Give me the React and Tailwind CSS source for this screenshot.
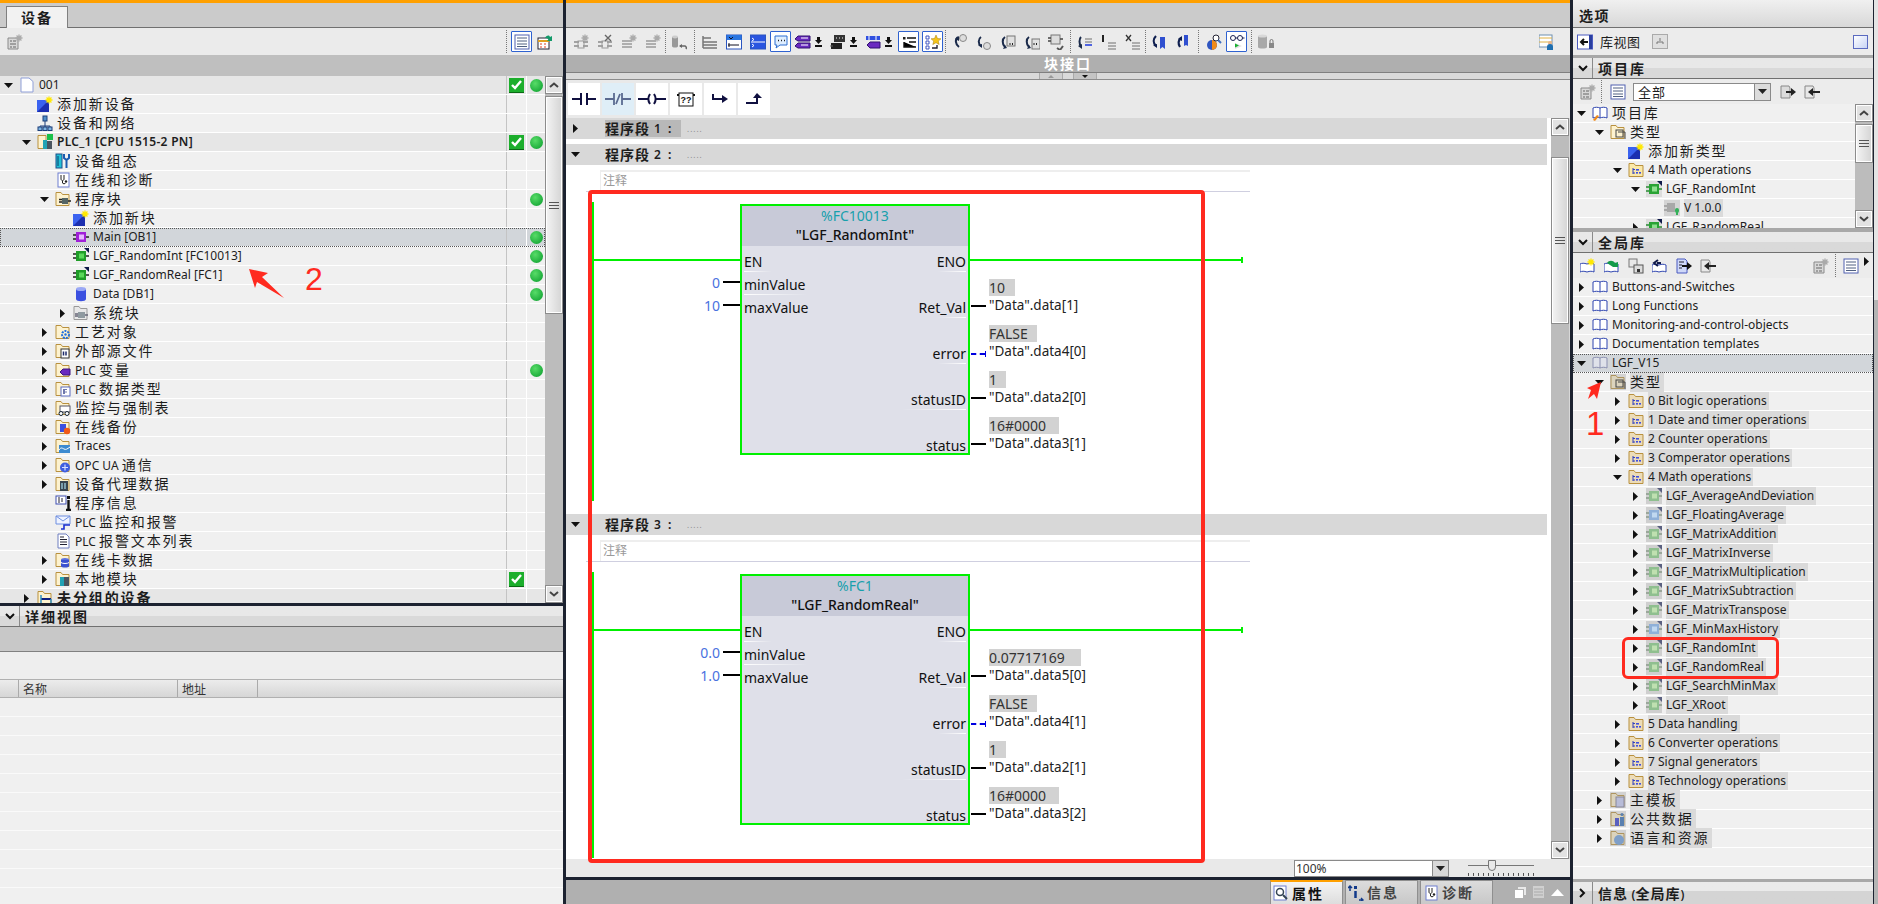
import React from "react";

const S = ({ w = 16, h = 16, children }) => (
    <svg width={w} height={h} viewBox={`0 0 ${w} ${h}`} className="shrink-0">
        {children}
    </svg>
);

// tree / toolbar icons, all hand drawn at 16px
const Star = ({ x = 12, y = 4, r = 3.5, c = "#ffe800" }) => (
    <g stroke={c} strokeWidth="1.3">
        <path d={`M${x - r} ${y}h${2 * r}M${x} ${y - r}v${2 * r}M${x - r * 0.7} ${y - r * 0.7}l${r * 1.4} ${r * 1.4}M${x + r * 0.7} ${y - r * 0.7}l${-r * 1.4} ${r * 1.4}`} />
    </g>
);
const AddIcon = () => (
    <S>
        <path d="M0 4h12v12H0z" fill="#3a62f0" />
        <path d="M0 16L12 4v12z" fill="#1c2fb0" />
        <Star />
    </S>
);
const NetIcon = () => (
    <S>
        <path d="M8 6v4M3 14v-3h10v3M8 10v4" stroke="#1c3f7a" fill="none" />
        <rect x="6" y="1" width="4" height="5" fill="#4f8fc9" stroke="#1c3f7a" />
        <rect x="1" y="12" width="4" height="3.5" fill="#7fb4e0" stroke="#1c3f7a" />
        <rect x="6" y="12" width="4" height="3.5" fill="#7fb4e0" stroke="#1c3f7a" />
        <rect x="11" y="12" width="4" height="3.5" fill="#7fb4e0" stroke="#1c3f7a" />
    </S>
);
const Folder = ({ children, dim }) => (
    <S>
        <path d="M1 1.5h5l1.5 2H14v11H1z" fill="#fdf2cf" stroke="#b9913f" />
        {dim && <rect x="0" y="0" width="16" height="16" fill="#9c9c9c" opacity=".35" />}
        {children}
    </S>
);
const PlcIcon = () => (
    <S>
        <path d="M1 1.5h8v13H1z" fill="#fdf2cf" stroke="#b9913f" />
        <rect x="10" y="0" width="6" height="6" fill="#19c04a" />
        <rect x="6" y="6" width="4" height="9" fill="#22a3b5" />
        <rect x="10" y="7" width="5" height="8" fill="#4a5560" />
    </S>
);
const CfgIcon = () => (
    <S>
        <rect x="1" y="1" width="6" height="14" fill="#22c1d6" stroke="#1c4f8a" />
        <path d="M3 3v10" stroke="#0a3d6a" />
        <path d="M9 1v4l2.5 2L14 5V1M11.5 7v8" stroke="#1a5cb0" strokeWidth="2" fill="none" />
    </S>
);
const DiagIcon = () => (
    <S>
        <rect x="3" y="1" width="11" height="14" fill="#fff" stroke="#6f7fd0" />
        <path d="M6 3v4c0 2 3 2 3 0V3M7.5 9v2c0 1 3 1 3 0" stroke="#222" fill="none" />
        <circle cx="11" cy="9.5" r="1.2" fill="#222" />
    </S>
);
const BlockPin = ({ fill, dark, pin = "#222" }) => (
    <>
        <path d="M0 6h3M0 10h3M13 8h3" stroke={pin} strokeWidth="1.4" />
        <rect x="3" y="3" width="10" height="10" fill={fill} />
        <rect x="6" y="5.5" width="5" height="5" fill={dark} />
    </>
);
const ObIcon = () => (
    <S>
        <BlockPin fill="#a020d8" dark="#e6b8ff" />
    </S>
);
const FcIcon = () => (
    <S>
        <BlockPin fill="#1f9d28" dark="#5ad85a" />
        <path d="M11 0h5v5z" fill="#101a4a" />
    </S>
);
const TypeIcon = ({ fill = "#8fbf8f", dark = "#bfe0b0" }) => (
    <S>
        <rect width="16" height="16" fill="#cfcfcf" />
        <BlockPin fill={fill} dark={dark} pin="#8a9a8a" />
        <path d="M11 0h5v5z" fill="#5a6080" />
    </S>
);
const TypeSolid = () => (
    <S>
        <rect width="16" height="16" fill="#dcdcdc" />
        <BlockPin fill="#2aa335" dark="#8fe08f" pin="#2a8a35" />
        <path d="M11 0h5v5z" fill="#101a4a" />
    </S>
);
const VerIcon = () => (
    <S>
        <rect width="16" height="16" fill="#d4d4d4" />
        <path d="M0 6h3M0 10h3" stroke="#999" strokeWidth="1.4" />
        <rect x="3" y="3" width="8" height="9" fill="#a8a8a8" />
        <rect x="11" y="8" width="4" height="5" rx="2" fill="#35b05a" />
        <rect x="12" y="12" width="2" height="3" fill="#35b05a" />
    </S>
);
const DbIcon = () => (
    <S>
        <path d="M3 3v10c0 3 10 3 10 0V3z" fill="#3b50e0" />
        <ellipse cx="8" cy="3" rx="5" ry="2" fill="#9aa8f5" />
    </S>
);
const SysIcon = () => (
    <S>
        <path d="M1 1.5h5l1.5 2H14v11H1z" fill="#e8e8e8" stroke="#999" />
        <rect x="5" y="7" width="7" height="6" fill="#8f9aa0" />
        <path d="M2 9h3M2 11h3M12 10h3" stroke="#667" strokeWidth="1.4" />
    </S>
);
const BlocksFolder = () => (
    <Folder>
        <rect x="7" y="7" width="6" height="6" fill="#566" />
        <path d="M4 8.5h3M4 11h3M13 10h3" stroke="#222" strokeWidth="1.4" />
    </Folder>
);
const TechFolder = () => (
    <Folder>
        <circle cx="10.5" cy="10.5" r="3.5" fill="none" stroke="#1f6fe0" strokeWidth="2" strokeDasharray="2 1" />
        <circle cx="10.5" cy="10.5" r="1.2" fill="#1f6fe0" />
    </Folder>
);
const SrcFolder = () => (
    <Folder>
        <rect x="6" y="6" width="8" height="9" fill="#fff" stroke="#333" />
        <path d="M8.5 8.5v4M11 8.5v4" stroke="#1c2a6a" strokeWidth="1.5" />
    </Folder>
);
const TagFolder = () => (
    <Folder>
        <path d="M5 10l3-3h7v6H8z" fill="#6a2ac0" stroke="#3a1580" />
    </Folder>
);
const TypeFolder = () => (
    <Folder>
        <rect x="6" y="6" width="9" height="9" fill="#fff" stroke="#5a6bc0" />
        <path d="M9 8v5M11 8v1M11 10.5v1" stroke="#223080" strokeWidth="1.3" />
    </Folder>
);
const WatchFolder = () => (
    <Folder>
        <rect x="5" y="6" width="10" height="6" fill="#fff" stroke="#556" />
        <circle cx="6" cy="13.5" r="2" fill="#fff" stroke="#123" />
        <circle cx="12" cy="13.5" r="2" fill="#fff" stroke="#123" />
    </Folder>
);
const BackupFolder = () => (
    <Folder>
        <rect x="5" y="5" width="6" height="8" fill="#3b50e0" />
        <circle cx="12" cy="12" r="3.2" fill="#f05a1a" />
    </Folder>
);
const TraceFolder = () => (
    <Folder>
        <rect x="4" y="7" width="11" height="8" fill="#3c8ad0" />
        <path d="M4 12c2-3 3-2 5-1s3 0 6-2" stroke="#fff" fill="none" />
    </Folder>
);
const OpcFolder = () => (
    <Folder>
        <circle cx="10" cy="10.5" r="5" fill="#3f5fe0" />
        <path d="M7 10.5h6M10 7.5v6" stroke="#d8e0ff" strokeWidth="1.2" />
    </Folder>
);
const ProxyFolder = () => (
    <Folder>
        <rect x="5" y="5" width="8" height="10" fill="#3a4650" />
        <path d="M7 7v6M10 7v6" stroke="#9fd0e0" strokeWidth="1.3" />
    </Folder>
);
const CardFolder = () => (
    <Folder>
        <ellipse cx="10" cy="7.5" rx="4" ry="1.6" fill="#5a70e0" />
        <path d="M6 8v6c0 2 8 2 8 0V8" fill="#3b50d0" />
        <path d="M6 10.5c1 1.3 7 1.3 8 0" stroke="#fff" fill="none" />
    </Folder>
);
const LocalFolder = () => (
    <Folder>
        <rect x="5" y="6" width="4" height="9" fill="#22a3b5" />
        <rect x="9" y="6" width="5" height="9" fill="#4a5560" />
    </Folder>
);
const InfoIcon = () => (
    <S>
        <rect x="1" y="1" width="10" height="8" fill="#fff" stroke="#3f4fb0" />
        <path d="M3 3h2M3 5h2M3 7h2M7 3v4" stroke="#223" />
        <rect x="12" y="1" width="3" height="3" fill="#111" />
        <path d="M13.5 5v9M11 15h5" stroke="#111" strokeWidth="2.4" />
    </S>
);
const MailIcon = () => (
    <S>
        <path d="M1 2h14v8H1z" fill="#eef3ff" stroke="#6f8fe0" />
        <path d="M1 2l7 5 7-5" stroke="#6f8fe0" fill="none" />
        <path d="M6 15h3v-4h6" stroke="#1a2fd0" strokeWidth="1.6" fill="none" />
    </S>
);
const DocIcon = () => (
    <S>
        <path d="M3 1h8l3 3v11H3z" fill="#fff" stroke="#6f7fc0" />
        <path d="M5 4h4M5 6.5h7M5 9h7M5 11.5h7" stroke="#223" />
    </S>
);
const PageIcon = () => (
    <S>
        <path d="M2 1h8l4 3.5V15H2z" fill="#fff" stroke="#8f9fd8" />
    </S>
);
const Book = ({ dim, pen }) => (
    <S>
        <path d="M1 3c2-1 5-1 7 0 2-1 5-1 7 0v10c-2-1-5-1-7 0-2-1-5-1-7 0z" fill={dim ? "#dfe2ea" : "#fff"} stroke={dim ? "#8a8fb0" : "#2f45b0"} />
        <path d="M8 3v10" stroke={dim ? "#8a8fb0" : "#2f45b0"} />
        {pen && <path d="M1 15l4-5 2 1-4 5z" fill="#f08a1a" />}
    </S>
);
const LibTypes = ({ dim }) => (
    <Folder dim={dim}>
        <rect x="6" y="6" width="7" height="7" fill="none" stroke="#444" />
        <path d="M8 8h7v7" stroke="#444" fill="none" />
    </Folder>
);
const GroupFolder = ({ dim = true }) => (
    <S>
        <path d="M1 1.5h5l1.5 2H15v11H1z" fill={dim ? "#ecdcb8" : "#fbe9a8"} stroke="#b9913f" />
        <path d="M5 6v6M5 7.5h2M5 11h2" stroke="#2f3fc0" fill="none" />
        <rect x="8" y="7" width="3" height="1.6" fill="#3f4fe0" />
        <rect x="8" y="10" width="2" height="1.6" fill="#3f4fe0" />
        <rect x="11" y="10" width="2" height="1.6" fill="#3f4fe0" />
    </S>
);
const MasterFolder = () => (
    <Folder dim>
        <rect x="6" y="5" width="8" height="10" fill="#b8bcd8" stroke="#889" />
    </Folder>
);
const SharedFolder = () => (
    <Folder dim>
        <rect x="5" y="7" width="4" height="8" fill="#5a60c0" />
        <rect x="10" y="6" width="4" height="9" fill="#5a80b0" />
        <circle cx="12" cy="3.5" r="1.6" fill="#5a80b0" />
    </Folder>
);
const LangFolder = () => (
    <Folder dim>
        <circle cx="9" cy="10" r="5" fill="#7f9fc8" />
    </Folder>
);
const UngroupedFolder = () => (
    <Folder>
        <path d="M4 9h10" stroke="#102080" strokeWidth="2" />
        <path d="M4 5v8M14 9v5" stroke="#2f8fc0" strokeWidth="1.5" />
    </Folder>
);

// toolbar drawings
const GridStar = () => (
    <S>
        <path d="M1 4h10v11H1z" fill="#d8d8d8" stroke="#8a8a8a" />
        <path d="M3 7h2M6 7h3M3 10h6M3 13h2M6 13h3" stroke="#666" />
        <Star c="#aaa" x={12} y={4} />
    </S>
);
const ListBox = () => (
    <S>
        <rect x="1" y="1" width="14" height="14" fill="#fff" stroke="#5060b0" />
        <path d="M3 4h10M3 7h10M3 10h10M3 12.5h10" stroke="#4f5f80" />
    </S>
);
const TableArrow = () => (
    <S>
        <rect x="1" y="4" width="11" height="11" fill="#fff" stroke="#223" />
        <path d="M1 7h11" stroke="#e0a020" strokeWidth="2" />
        <path d="M3 10h2M7 10h2M3 13h2M7 13h2" stroke="#e04020" />
        <path d="M8 4c2-3 4-3 5-1l2-1v5h-5l1.5-1.5C11 4.500 10 4 8 4z" fill="#129a6a" />
    </S>
);
const PinsGray = ({ x }) => (
    <S>
        <path d="M1 8h5M1 12h5M10 8h5M10 12h5" stroke="#8a8a8a" strokeWidth="1.5" />
        <rect x="5" y="7" width="6" height="7" fill="none" stroke="#999" />
        {x ? <path d="M8 1l6 6M14 1l-6 6" stroke="#666" strokeWidth="1.4" /> : <Star x={12} y={4} c="#aaa" />}
    </S>
);
const LinesGray = () => (
    <S>
        <path d="M1 7h10M1 10h10M1 13h10" stroke="#9a9a9a" strokeWidth="1.6" />
        <Star x={12} y={4} c="#aaa" />
    </S>
);
const DbUndo = () => (
    <S w={18}>
        <path d="M1 3v9c0 2 6 2 6 0V3z" fill="#999" />
        <ellipse cx="4" cy="3" rx="3" ry="1.4" fill="#ccc" />
        <path d="M9 12h5a2 2 0 0 1 1 3" stroke="#666" strokeWidth="1.5" fill="none" />
        <path d="M11 10l-3 2 3 2z" fill="#666" />
    </S>
);
const Lines = () => (
    <S>
        <path d="M1 2v12M1 4h8M1 8h14M1 11h14M1 14h14" stroke="#777" strokeWidth="1.5" />
    </S>
);
const BlueForm = ({ fill }) => (
    <S>
        <rect x="0.5" y="1" width="15" height="14" fill={fill ? "#2a55e0" : "#fff"} stroke="#2a55c0" />
        {!fill && <rect x="0.5" y="1" width="15" height="5" fill="#2a75e0" />}
        <path d={fill ? "M2 4l2 1.500-2 1.500M2 10l2 1.500-2 1.500M1 8h14" : "M3 3l2 2 2-2M2 11h11M3 9v4"} stroke={fill ? "#fff" : "#112"} fill="none" />
    </S>
);
const Bubble = () => (
    <S>
        <path d="M2 2h12v9H7l-4 3 1-3H2z" fill="#dfeeff" stroke="#2f6fd0" />
        <path d="M5 6.500h1M8 6.500h1M11 6.500h1" stroke="#222" strokeWidth="1.5" />
    </S>
);
const Down = () => (
    <S w={9} h={12}>
        <path d="M4.500 8L1 4h2V1h3v3h2z" fill="#111" />
        <path d="M1 10h7" stroke="#111" strokeWidth="2" />
    </S>
);
const TagsDown = () => (
    <>
        <S>
            <path d="M0 5l3-3h12v5H3zM0 12l3-3h12v5H3z" fill="#6a2ac0" stroke="#301070" />
            <path d="M6 4h7M6 11h7" stroke="#fff" strokeWidth="1.2" />
        </S>
        <span className="w-[3px]" />
        <Down />
    </>
);
const BubbleDown = () => (
    <>
        <S>
            <path d="M4 1h11v7H4z" fill="#333" />
            <path d="M6 4h1M9 4h1M12 4h1" stroke="#fff" />
            <rect x="1" y="9" width="11" height="6" fill="#222" />
            <path d="M0 12h3" stroke="#666" />
        </S>
        <span className="w-[3px]" />
        <Down />
    </>
);
const PinTagDown = () => (
    <>
        <S>
            <path d="M1 2h14v4H1z" fill="#3050e0" />
            <path d="M4 2v4M11 2v4" stroke="#fff" />
            <path d="M2 11l3-3h10v6H5z" fill="#6a2ac0" stroke="#301070" />
        </S>
        <span className="w-[3px]" />
        <Down />
    </>
);
const FbdList = () => (
    <S>
        <rect x="2" y="3" width="2.5" height="2.5" fill="#222" />
        <path d="M6 4h9M3 8v5h12M8 8h7" stroke="#111" strokeWidth="1.4" />
    </S>
);
const StarList = () => (
    <S>
        <path d="M1 2h3v3H1zM1 7h3v3H1zM1 12h3v3H1z" fill="#fff" stroke="#3f55c0" />
        <path d="M11 1l1.500 3.500 3.500.3-2.700 2.300.9 3.500L11 8.700l-3.200 1.900.9-3.500L6 4.800l3.500-.3z" fill="#f5c518" stroke="#a07a10" strokeWidth=".5" />
        <path d="M7 14h5v-3" stroke="#223" strokeWidth="1.4" fill="none" />
    </S>
);
const TurnGear = ({ flip }) => (
    <S>
        <path d={flip ? "M5 3c-3 2-3 7 0 9" : "M6 3c-3 2-3 7 1 10"} stroke="#1a2a4a" strokeWidth="2" fill="none" />
        <path d={flip ? "M2 11l4 3 0-4z" : "M3 5l4-3 0 5z"} fill="#1a2a4a" />
        <circle cx="11" cy={flip ? 12 : 4} r="3.5" fill="#ddd" stroke="#888" />
    </S>
);
const TurnDoc = ({ flip }) => (
    <S>
        <path d="M5 3c-3 2-3 7 0 10" stroke="#1a2a4a" strokeWidth="2" fill="none" />
        <path d="M3 15l4-1-2-3z" fill="#1a2a4a" />
        <rect x={flip ? 8 : 7} y={flip ? 5 : 2} width="8" height="10" fill="#e0e0e0" stroke="#777" />
        <path d="M10 9v2M12.500 9v2" stroke="#222" />
    </S>
);
const PinDoc = () => (
    <S>
        <rect x="3" y="1" width="9" height="9" fill="#ddd" stroke="#777" />
        <path d="M0 4h3M0 7h3M12 5h3" stroke="#444" strokeWidth="1.5" />
        <path d="M9 14l3 2 3-4" stroke="#555" strokeWidth="2" fill="none" />
    </S>
);
const TurnLines = () => (
    <S>
        <path d="M4 3c-2 2-2 7 0 9" stroke="#1a2a4a" strokeWidth="2" fill="none" />
        <path d="M1 12l4 3v-5z" fill="#1a2a4a" />
        <path d="M8 5h7M8 8h7" stroke="#999" strokeWidth="1.6" />
        <path d="M8 11h7" stroke="#3f55e0" strokeWidth="1.8" />
    </S>
);
const BarLines = ({ x }) => (
    <S>
        {x ? <path d="M1 1l5 6M6 1L1 7" stroke="#333" strokeWidth="1.3" /> : <path d="M2 1v7" stroke="#222" strokeWidth="2" />}
        <path d="M7 9h8M7 12h8M7 15h8" stroke="#999" strokeWidth="1.7" />
    </S>
);
const TurnBook = ({ flip }) => (
    <S>
        <path d={flip ? "M6 4c-3 2-3 6-1 9" : "M5 2C2 5 2 9 5 12"} stroke="#0f1f50" strokeWidth="2.2" fill="none" />
        <path d={flip ? "M3 5l4-3 0 5z" : "M2 11l4 3 0-4z"} fill="#0f1f50" />
        <path d={flip ? "M9 1h4v11l-2-1-2 1z" : "M9 3h5v12l-2.500-2L9 15z"} fill="#2f4fd0" />
    </S>
);
const Scope = () => (
    <S>
        <circle cx="6" cy="11" r="5" fill="#2f55c0" />
        <path d="M6 6a5 5 0 0 1 0 10z" fill="#f08a1a" />
        <circle cx="10" cy="4" r="3" fill="#fff" stroke="#223" />
        <path d="M12 6l3 3" stroke="#3f6fc0" strokeWidth="2" />
    </S>
);
const GlassesFlag = () => (
    <S>
        <circle cx="4" cy="4" r="2.500" fill="#fff" stroke="#1a2050" />
        <circle cx="11" cy="4" r="2.500" fill="#fff" stroke="#1a2050" />
        <path d="M6.500 4h2M13.500 4h2" stroke="#1a2050" />
        <path d="M6 9v6l7-3z" fill="#e0e0e0" />
        <path d="M6 9.500v4l4-2z" fill="#17b030" />
    </S>
);
const DbLock = () => (
    <S w={18}>
        <path d="M1 2v11c0 2 9 2 9 0V2z" fill="#a8a8a8" />
        <ellipse cx="5.500" cy="2" rx="4.500" ry="1.600" fill="#d8d8d8" />
        <rect x="12" y="9" width="5" height="5" fill="#888" />
        <path d="M13 9V7a1.500 1.500 0 0 1 3 0v2" stroke="#777" fill="none" />
    </S>
);
const WinUser = () => (
    <S>
        <rect x="0" y="1" width="13" height="12" fill="#fff" stroke="#6f8fb0" />
        <path d="M0 4h13M0 8h13" stroke="#e0b040" />
        <circle cx="11" cy="9" r="2" fill="#e8b48a" />
        <path d="M8 16v-3a3 3 0 0 1 6 0v3z" fill="#1f6fb0" />
    </S>
);
const CenterTabIcon = ({ k }) => {
    if (k === 0)
        return (
            <S>
                <rect x="1" y="1" width="12" height="14" fill="#fff" stroke="#6f7fd0" />
                <circle cx="7" cy="7" r="3.500" fill="none" stroke="#345" strokeWidth="1.500" />
                <path d="M10 10l4 4" stroke="#345" strokeWidth="2" />
            </S>
        );
    if (k === 1)
        return (
            <S>
                <path d="M2 6V1M0 3l2-2 2 2" stroke="#123a8a" strokeWidth="1.500" fill="none" />
                <rect x="6" y="1" width="3" height="3" fill="#123a8a" />
                <path d="M7.500 6v7" stroke="#123a8a" strokeWidth="2.500" />
                <path d="M11 15h4m-2-2l2 2-2 1" stroke="#123a8a" strokeWidth="1.300" fill="none" />
            </S>
        );
    return <DiagIcon />;
};

// helpers for the text: CJK runs get their own face and spacing
const Txt = ({ text, bold, cls = "text-[14px] tracking-[1.9px]" }) => (
    <>
        {text.split(/([\u4e00-\u9fff]+)/).map((part, i) =>
            /[\u4e00-\u9fff]/.test(part) ? (
                <span key={i} className={`font-['Noto_Sans_CJK_SC'] ${bold ? "font-bold" : ""} ${cls}`}>
                    {part}
                </span>
            ) : (
                <span key={i} className={bold ? "font-semibold tracking-[.3px]" : ""}>
                    {part}
                </span>
            )
        )}
    </>
);

const Tri = ({ dir }) =>
    dir === "down" ? (
        <svg width="9" height="5" viewBox="0 0 9 5" className="shrink-0">
            <path d="M0 0h9L4.500 5z" fill="#111" />
        </svg>
    ) : dir === "right" ? (
        <svg width="5" height="9" viewBox="0 0 5 9" className="shrink-0 ml-[2px]">
            <path d="M0 0v9l5-4.500z" fill="#111" />
        </svg>
    ) : null;

const CheckBox = () => (
    <div className="flex h-[14px] w-[15px] items-center justify-center bg-[#1cae2c] shadow-[0_1px_0_#0a6a14]">
        <svg width="11" height="10" viewBox="0 0 11 10">
            <path d="M1 5l3 3 6-7" stroke="#fff" strokeWidth="2.400" fill="none" />
        </svg>
    </div>
);
const Dot = () => <div className="h-[13px] w-[13px] rounded-full bg-radial-[at_40%_35%] from-[#58dc68] to-[#069a2a]" />;

const Chev = ({ up }) => (
    <svg width="10" height="6" viewBox="0 0 10 6">
        <path d={up ? "M1 5l4-3.500L9 5" : "M1 1l4 3.500L9 1"} stroke="#444" strokeWidth="2" fill="none" />
    </svg>
);
const ScrollBtn = ({ up }) => (
    <div className="flex h-[18px] w-full shrink-0 items-center justify-center border border-[#8c8c8c] bg-[#e2e2e2] shadow-[inset_0_0_0_1px_#fff]">
        <Chev up={up} />
    </div>
);
const Scrollbar = ({ thumb, before = 1, width = "w-[18px]" }) => (
    <div className={`flex shrink-0 flex-col bg-[#bcbcbc] ${width}`}>
        <ScrollBtn up />
        <div className="shrink-0" style={{ height: before }} />
        <div className="flex shrink-0 items-center justify-center border border-[#8c8c8c] bg-linear-to-r from-[#f4f4f4] to-[#d4d4d4] shadow-[inset_0_0_0_1px_#fff]" style={{ height: thumb }}>
            <div className="flex h-[7px] w-[10px] flex-col justify-between border-y border-[#555]">
                <div className="mt-[2px] h-px bg-[#555]" />
            </div>
        </div>
        <div className="flex-1" />
        <ScrollBtn />
    </div>
);

const TreeRow = ({ level = 0, arrow, icon, text, group, sel, bold, hl, children }) => (
    <div
        className={`flex h-[19px] shrink-0 items-center border-b border-white ${
            sel ? "bg-[#d2d6da] outline-1 -outline-offset-1 outline-dotted outline-[#555]" : group ? "bg-[#e6e6e6]" : "bg-[#f0f0f0]"
        }`}
    >
        <div className="flex min-w-0 flex-1 items-center" style={{ paddingLeft: 4 + 18 * level }}>
            <div className="flex w-[13px] shrink-0 items-center">
                <Tri dir={arrow} />
            </div>
            <div className="ml-[2px] w-[16px] shrink-0">{icon}</div>
            <div className={`ml-[4px] whitespace-nowrap leading-[18px] ${hl ? "bg-[#dadada] pr-[2px]" : ""}`}>
                <Txt text={text} bold={bold} />
            </div>
        </div>
        {children}
    </div>
);

const devRows = [
    { level: 0, arrow: "down", icon: <PageIcon />, text: "001", group: true, check: true, dot: true },
    { level: 1, icon: <AddIcon />, text: "添加新设备" },
    { level: 1, icon: <NetIcon />, text: "设备和网络" },
    { level: 1, arrow: "down", icon: <PlcIcon />, text: "PLC_1 [CPU 1515-2 PN]", group: true, bold: true, check: true, dot: true },
    { level: 2, icon: <CfgIcon />, text: "设备组态" },
    { level: 2, icon: <DiagIcon />, text: "在线和诊断" },
    { level: 2, arrow: "down", icon: <BlocksFolder />, text: "程序块", dot: true },
    { level: 3, icon: <AddIcon />, text: "添加新块" },
    { level: 3, icon: <ObIcon />, text: "Main [OB1]", sel: true, dot: true },
    { level: 3, icon: <FcIcon />, text: "LGF_RandomInt [FC10013]", dot: true },
    { level: 3, icon: <FcIcon />, text: "LGF_RandomReal [FC1]", dot: true },
    { level: 3, icon: <DbIcon />, text: "Data [DB1]", dot: true },
    { level: 3, arrow: "right", icon: <SysIcon />, text: "系统块" },
    { level: 2, arrow: "right", icon: <TechFolder />, text: "工艺对象" },
    { level: 2, arrow: "right", icon: <SrcFolder />, text: "外部源文件" },
    { level: 2, arrow: "right", icon: <TagFolder />, text: "PLC 变量", dot: true },
    { level: 2, arrow: "right", icon: <TypeFolder />, text: "PLC 数据类型" },
    { level: 2, arrow: "right", icon: <WatchFolder />, text: "监控与强制表" },
    { level: 2, arrow: "right", icon: <BackupFolder />, text: "在线备份" },
    { level: 2, arrow: "right", icon: <TraceFolder />, text: "Traces" },
    { level: 2, arrow: "right", icon: <OpcFolder />, text: "OPC UA 通信" },
    { level: 2, arrow: "right", icon: <ProxyFolder />, text: "设备代理数据" },
    { level: 2, icon: <InfoIcon />, text: "程序信息" },
    { level: 2, icon: <MailIcon />, text: "PLC 监控和报警" },
    { level: 2, icon: <DocIcon />, text: "PLC 报警文本列表" },
    { level: 2, arrow: "right", icon: <CardFolder />, text: "在线卡数据" },
    { level: 2, arrow: "right", icon: <LocalFolder />, text: "本地模块", check: true },
    { level: 1, arrow: "right", icon: <UngroupedFolder />, text: "未分组的设备", group: true, bold: true },
];

const projectLib = [
    { level: 0, arrow: "down", icon: <Book pen />, text: "项目库" },
    { level: 1, arrow: "down", icon: <LibTypes />, text: "类型" },
    { level: 2, icon: <AddIcon />, text: "添加新类型" },
    { level: 2, arrow: "down", icon: <GroupFolder dim={false} />, text: "4 Math operations" },
    { level: 3, arrow: "down", icon: <TypeSolid />, text: "LGF_RandomInt" },
    { level: 4, icon: <VerIcon />, text: "V 1.0.0", hl: true },
    { level: 3, arrow: "right", icon: <TypeSolid />, text: "LGF_RandomReal" },
];

const grp = (text, arrow = "right") => ({ level: 2, arrow, icon: <GroupFolder />, text, hl: true });
const typ = (text, blue) => ({
    level: 3,
    arrow: "right",
    icon: blue ? <TypeIcon fill="#8fb0d8" dark="#c0d8f0" /> : <TypeIcon />,
    text,
    hl: true,
});
const globalLib = [
    { level: 0, arrow: "right", icon: <Book />, text: "Buttons-and-Switches" },
    { level: 0, arrow: "right", icon: <Book />, text: "Long Functions" },
    { level: 0, arrow: "right", icon: <Book />, text: "Monitoring-and-control-objects" },
    { level: 0, arrow: "right", icon: <Book />, text: "Documentation templates" },
    { level: 0, arrow: "down", icon: <Book dim />, text: "LGF_V15", sel: true },
    { level: 1, arrow: "down", icon: <LibTypes dim />, text: "类型", hl: true },
    grp("0 Bit logic operations"),
    grp("1 Date and timer operations"),
    grp("2 Counter operations"),
    grp("3 Comperator operations"),
    grp("4 Math operations", "down"),
    typ("LGF_AverageAndDeviation"),
    typ("LGF_FloatingAverage", true),
    typ("LGF_MatrixAddition"),
    typ("LGF_MatrixInverse"),
    typ("LGF_MatrixMultiplication"),
    typ("LGF_MatrixSubtraction"),
    typ("LGF_MatrixTranspose"),
    typ("LGF_MinMaxHistory", true),
    typ("LGF_RandomInt"),
    typ("LGF_RandomReal"),
    typ("LGF_SearchMinMax"),
    typ("LGF_XRoot"),
    grp("5 Data handling"),
    grp("6 Converter operations"),
    grp("7 Signal generators"),
    grp("8 Technology operations"),
    { level: 1, arrow: "right", icon: <MasterFolder />, text: "主模板", hl: true },
    { level: 1, arrow: "right", icon: <SharedFolder />, text: "公共数据", hl: true },
    { level: 1, arrow: "right", icon: <LangFolder />, text: "语言和资源", hl: true },
];

const Sep = ({ cls = "" }) => <div className={`h-[23px] w-0 border-l border-dotted border-[#777] ${cls}`} />;
const SelBtn = ({ children, cls = "" }) => (
    <div className={`flex h-[21px] w-[21px] shrink-0 items-center justify-center rounded-[1px] border border-[#2f62d0] bg-white ${cls}`}>{children}</div>
);
const Tb = ({ children, cls = "w-[24px]" }) => <div className={`flex shrink-0 items-center justify-center ${cls}`}>{children}</div>;

const PanelHead = ({ title }) => (
    <div className="flex h-[21px] shrink-0 items-center border-b border-[#707070] bg-linear-to-b from-[#e8e8e8] from-50% to-[#d9d9d9] to-50%">
        <div className="flex h-full w-[20px] shrink-0 items-center justify-center border-r border-[#8a8a8a]">
            <svg width="10" height="7" viewBox="0 0 10 7">
                <path d="M1 1l4 4 4-4" stroke="#111" strokeWidth="2" fill="none" />
            </svg>
        </div>
        <div className="ml-[5px]">
            <Txt text={title} bold cls="text-[14px] tracking-[2px]" />
        </div>
    </div>
);

const Ins = ({ active, children }) => (
    <div className={`flex h-[32px] w-[32px] items-center justify-center ${active ? "bg-[#dfeef7]" : "bg-white"}`}>{children}</div>
);

const NetHeader = ({ num, open, mark }) => (
    <div className="mr-[4px] flex h-[21px] shrink-0 items-center bg-[#d8d8d8]">
        <div className="flex w-[39px] shrink-0 items-center pl-[5px]">
            <Tri dir={open ? "down" : "right"} />
        </div>
        <div className={`flex h-[17px] w-[76px] items-center ${mark ? "bg-[#b8b8b8]" : ""}`}>
            <span className="font-['Noto_Sans_CJK_SC'] text-[14px] font-bold tracking-[1px]">程序段</span>
            <span className="ml-[4px] font-semibold">{num}</span>
            <span className="ml-[7px] font-bold">:</span>
        </div>
        <span className="ml-[6px] text-[8px] leading-[8px] tracking-[1px] text-[#888]">.....</span>
    </div>
);

const Comment = () => (
    <>
        <div className="mt-[5px] ml-[34px] flex h-[21px] w-[650px] shrink-0 items-start border-t-2 border-l border-[#eeeeee] pl-[2px]">
            <span className="font-['Noto_Sans_CJK_SC'] text-[12px] leading-[16px] text-[#999]">注释</span>
        </div>
        <div className="ml-[20px] h-px w-[664px] shrink-0 bg-[#cfcfe0]" />
    </>
);

// one FBD box with its rung and wires; a free canvas, so the parts sit at coordinates
const Pin = ({ text, right, line = true, wide }) => (
    <div className={`relative flex h-[23px] items-center pt-[2px] text-[14px] leading-[20px] text-[#111] ${right ? "justify-end pr-[2px]" : "pl-[2px]"}`}>
        {text}
        {line && (
            <div
                className={`absolute bottom-0 h-px ${wide ? "w-[64px]" : "w-[28px]"} ${
                    right ? "right-[2px] bg-linear-to-l" : "left-[2px] bg-linear-to-r"
                } from-white to-transparent`}
            />
        )}
    </div>
);

const Fbd = ({ addr, name, inputs, outputs, rail, height }) => (
    <div className="relative shrink-0" style={{ height }}>
        <div className="absolute top-[10px] left-[26px] w-[2px] bg-[#00f000]" style={{ height: rail }} />
        <div className="absolute top-[67px] left-[26px] h-[2px] w-[149px] bg-[#00f000]" />
        <div className="absolute top-[67px] left-[403px] h-[2px] w-[273px] bg-[#00f000]" />
        <div className="absolute top-[65px] left-[675px] h-[6px] w-[2px] bg-[#00f000]" />

        {inputs.map((v, i) => (
            <div key={i} className="absolute left-[100px] flex h-[20px] w-[74px] items-center justify-end" style={{ top: 80 + i * 23 }}>
                <span className="mr-[3px] text-[14px] text-[#4a72e0]">{v}</span>
                <div className="h-[2px] w-[17px] bg-black" />
            </div>
        ))}

        <div className="absolute top-[12px] left-[174px] flex h-[251px] w-[230px] flex-col border-2 border-[#00f000] bg-[#dfe0e9]">
            <div className="flex h-[40px] shrink-0 flex-col items-center bg-[#c8cad8] text-[14px] leading-[19px]">
                <span className="text-[#17a0ac]">{addr}</span>
                <span className="font-medium text-[#111]">{name}</span>
            </div>
            <div className="flex flex-1 justify-between pt-[3px]">
                <div className="flex w-[90px] flex-col">
                    <Pin text="EN" />
                    <Pin text="minValue" wide />
                    <Pin text="maxValue" line={false} />
                </div>
                <div className="flex w-[90px] flex-col">
                    <Pin text="ENO" right />
                    {["Ret_Val", "error", "statusID", "status"].map((p, i) => (
                        <div key={p} className="flex h-[46px] flex-col justify-end">
                            <Pin text={p} right line={i < 3} wide={i === 2} />
                        </div>
                    ))}
                </div>
            </div>
        </div>

        {outputs.map((o, i) => (
            <div key={i} className="absolute left-[405px] flex items-start" style={{ top: 87 + i * 46 }}>
                <div className="mt-[26px] flex w-[15px] shrink-0 items-center">
                    {o.dashed ? (
                        <>
                            <div className="h-0 flex-1 border-t-2 border-dashed border-[#0000e0]" />
                            <div className="h-[6px] w-px bg-[#0000e0]" />
                        </>
                    ) : (
                        <div className="h-[2px] w-full bg-black" />
                    )}
                </div>
                <div className="ml-[3px] flex flex-col items-start text-[14px] leading-[18px] text-[#222]">
                    <div className="h-[17px] bg-[#d2d2d2] pr-[8px] text-[#333]" style={{ width: o.w }}>
                        {o.value}
                    </div>
                    <div className="text-[13.5px] whitespace-nowrap">{o.name}</div>
                </div>
            </div>
        ))}
    </div>
);

const Section = ({ className = "", children }) => <div className={`flex shrink-0 items-center ${className}`}>{children}</div>;

export default function App() {
    return (
        <div className="relative flex h-[904px] w-[1878px] overflow-hidden bg-[#f0f0f0] font-['Noto_Sans'] text-[12px] text-[#1d1d1d]">
            {/* left: device tree and details */}
            <div className="flex w-[563px] shrink-0 flex-col">
                <div className="h-[3px] shrink-0 bg-[#ffa000]" />
                <div className="flex h-[25px] shrink-0 items-end border-b border-[#707070] bg-[#cbcbcb] pl-[6px]">
                    <div className="-mb-px flex h-[22px] w-[62px] items-center justify-center border border-b-0 border-[#808080] bg-[#f2f2f2]">
                        <Txt text="设备" bold cls="text-[14px] tracking-[2px]" />
                    </div>
                </div>
                <Section className="h-[27px] bg-[#ebebeb] pl-[7px]">
                    <GridStar />
                    <Sep cls="ml-auto mr-[4px]" />
                    <SelBtn cls="mr-[5px]">
                        <ListBox />
                    </SelBtn>
                    <TableArrow />
                    <div className="w-[10px]" />
                </Section>
                <div className="h-[21px] shrink-0 bg-[#bfbfbf]" />
                <div className="flex h-[527px] shrink-0 overflow-hidden">
                    <div className="min-w-0 flex-1">
                        {devRows.map((r, i) => (
                            <TreeRow key={i} {...r}>
                                <div className="flex h-full w-[20px] shrink-0 items-center justify-center border-l border-[#c4c4c4]">{r.check && <CheckBox />}</div>
                                <div className="flex h-full w-[19px] shrink-0 items-center justify-center border-l border-white">{r.dot && <Dot />}</div>
                            </TreeRow>
                        ))}
                    </div>
                    <Scrollbar thumb={218} before={2} />
                </div>
                <div className="h-[3px] shrink-0 bg-[#1c2230]" />
                <PanelHead title="详细视图" />
                <div className="h-[25px] shrink-0 border-b border-[#808080] bg-[#c8c8c8]" />
                <div className="h-[27px] shrink-0 bg-[#eeeeee]" />
                <div className="flex h-[19px] shrink-0 border-y border-[#b0b0b0] bg-linear-to-b from-[#ececec] to-[#d6d6d6] text-[#333]">
                    <div className="w-[19px] border-r border-[#aaa]" />
                    <div className="flex w-[159px] items-center border-r border-[#aaa] pl-[4px]">
                        <Txt text="名称" cls="text-[12px]" />
                    </div>
                    <div className="flex w-[80px] items-center border-r border-[#aaa] pl-[4px]">
                        <Txt text="地址" cls="text-[12px]" />
                    </div>
                </div>
                <div className="flex-1 bg-[repeating-linear-gradient(to_bottom,#f0f0f0_0,#f0f0f0_18px,#fafafa_18px,#fafafa_19px)]" />
            </div>
            <div className="w-[3px] shrink-0 bg-[#1c2230]" />

            {/* center: program editor */}
            <div className="flex min-w-0 flex-1 flex-col">
                <div className="h-[3px] shrink-0 bg-[#ffa000]" />
                <div className="h-[25px] shrink-0 border-b border-[#707070] bg-[#cbcbcb]" />
                <Section className="h-[27px] bg-[#ebebeb] pl-[3px]">
                    <Tb><PinsGray /></Tb>
                    <Tb><PinsGray x /></Tb>
                    <Tb><LinesGray /></Tb>
                    <Tb><LinesGray /></Tb>
                    <Sep />
                    <Tb cls="w-[28px]"><DbUndo /></Tb>
                    <Sep />
                    <Tb cls="w-[27px] pl-[3px]"><Lines /></Tb>
                    <Tb><BlueForm /></Tb>
                    <Tb><BlueForm fill /></Tb>
                    <SelBtn><Bubble /></SelBtn>
                    <Tb cls="w-[35px]"><TagsDown /></Tb>
                    <Tb cls="w-[35px]"><BubbleDown /></Tb>
                    <Tb cls="w-[35px]"><PinTagDown /></Tb>
                    <SelBtn cls="ml-[2px]"><FbdList /></SelBtn>
                    <SelBtn cls="ml-[3px]"><StarList /></SelBtn>
                    <Sep cls="ml-[2px] mr-[2px]" />
                    <Tb><TurnGear /></Tb>
                    <Tb><TurnGear flip /></Tb>
                    <Tb><TurnDoc /></Tb>
                    <Tb><TurnDoc flip /></Tb>
                    <Tb><PinDoc /></Tb>
                    <Sep cls="ml-[2px] mr-[2px]" />
                    <Tb><TurnLines /></Tb>
                    <Tb><BarLines /></Tb>
                    <Tb><BarLines x /></Tb>
                    <Sep cls="mr-[1px]" />
                    <Tb><TurnBook /></Tb>
                    <Tb><TurnBook flip /></Tb>
                    <Sep cls="ml-[3px] mr-[3px]" />
                    <Tb><Scope /></Tb>
                    <SelBtn><GlassesFlag /></SelBtn>
                    <Sep cls="ml-[4px] mr-[2px]" />
                    <Tb><DbLock /></Tb>
                    <div className="ml-auto mr-[15px]"><WinUser /></div>
                </Section>
                <div className="relative flex h-[18px] shrink-0 items-center justify-center border-b border-[#808080] bg-[#afafaf]">
                    <span className="font-['Noto_Sans_CJK_SC'] text-[14px] font-bold tracking-[2px] text-white">块接口</span>
                </div>
                <div className="flex h-[7px] shrink-0 justify-center border-b border-[#8c8c8c] bg-[#dadada]">
                    <div className="flex w-[58px] text-[#555]">
                        <div className="flex w-[24px] items-center justify-center border-x border-[#aaa] bg-[#d0d0d0]">
                            <svg width="6" height="3" viewBox="0 0 6 3"><path d="M0 3h6L3 0z" fill="#999" /></svg>
                        </div>
                        <div className="w-[10px]" />
                        <div className="flex w-[24px] items-center justify-center border-x border-[#aaa] bg-[#c4c4c4]">
                            <svg width="6" height="3" viewBox="0 0 6 3"><path d="M0 0h6L3 3z" fill="#111" /></svg>
                        </div>
                    </div>
                </div>
                <div className="flex h-[38px] shrink-0 items-center gap-[2px] bg-[#e9e9e9] pl-[2px]">
                    <Ins>
                        <svg width="24" height="12" viewBox="0 0 24 12"><path d="M0 6h9M9 0v12M15 0v12M15 6h9" stroke="#101040" strokeWidth="2" /></svg>
                    </Ins>
                    <Ins active>
                        <svg width="26" height="12" viewBox="0 0 26 12"><path d="M0 6h9M9 0v12M17 0v12M17 6h9M11 11l4-10" stroke="#5a6a90" strokeWidth="1.800" /></svg>
                    </Ins>
                    <Ins>
                        <svg width="28" height="12" viewBox="0 0 28 12"><path d="M0 6h11M17 6h11M12 1c-2 3-2 7 0 10M16 1c2 3 2 7 0 10" stroke="#101040" strokeWidth="2" fill="none" /></svg>
                    </Ins>
                    <Ins>
                        <svg width="18" height="16" viewBox="0 0 18 16">
                            <rect x="2" y="2" width="14" height="13" fill="#fff" stroke="#111" />
                            <path d="M0 4h2M16 4h2" stroke="#111" strokeWidth="2" />
                            <text x="9" y="11.500" textAnchor="middle" fontSize="9" fontWeight="700" fill="#111" fontFamily="Liberation Sans">??</text>
                        </svg>
                    </Ins>
                    <Ins>
                        <svg width="16" height="10" viewBox="0 0 16 10"><path d="M1 0v5h10" stroke="#101040" strokeWidth="2" fill="none" /><path d="M10 1l6 4-6 4z" fill="#101040" /></svg>
                    </Ins>
                    <Ins>
                        <svg width="17" height="12" viewBox="0 0 17 12"><path d="M0 10h11V4" stroke="#101040" strokeWidth="2" fill="none" /><path d="M7 5l4-5 5 5z" fill="#101040" /></svg>
                    </Ins>
                </div>
                <div className="flex min-h-0 flex-1">
                    <div className="flex min-w-0 flex-1 flex-col overflow-hidden bg-white">
                        <NetHeader num="1" mark />
                        <div className="h-[5px] shrink-0" />
                        <NetHeader num="2" open />
                        <Comment />
                        <Fbd
                            addr="%FC10013"
                            name={'"LGF_RandomInt"'}
                            inputs={["0", "10"]}
                            rail={299}
                            height={322}
                            outputs={[
                                { value: "10", name: '"Data".data[1]', w: 26 },
                                { value: "FALSE", name: '"Data".data4[0]', w: 48, dashed: true },
                                { value: "1", name: '"Data".data2[0]', w: 17 },
                                { value: "16#0000", name: '"Data".data3[1]', w: 70 },
                            ]}
                        />
                        <NetHeader num="3" open />
                        <Comment />
                        <Fbd
                            addr="%FC1"
                            name={'"LGF_RandomReal"'}
                            inputs={["0.0", "1.0"]}
                            rail={286}
                            height={296}
                            outputs={[
                                { value: "0.07717169", name: '"Data".data5[0]', w: 92 },
                                { value: "FALSE", name: '"Data".data4[1]', w: 48, dashed: true },
                                { value: "1", name: '"Data".data2[1]', w: 17 },
                                { value: "16#0000", name: '"Data".data3[2]', w: 70 },
                            ]}
                        />
                    </div>
                    <Scrollbar thumb={167} before={21} />
                    <div className="w-px bg-[#d8d8d8]" />
                </div>
                <Section className="h-[18px] bg-[#e9e9e9]">
                    <div className="ml-[728px] flex h-[17px] w-[155px] border border-[#8a8a8a] bg-white">
                        <span className="flex-1 pl-[1px] text-[12px] leading-[15px] text-[#333]">100%</span>
                        <div className="flex w-[16px] items-center justify-center border-l border-[#8a8a8a] bg-[#d8d8d8]">
                            <svg width="9" height="5" viewBox="0 0 9 5"><path d="M0 0h9L4.500 5z" fill="#222" /></svg>
                        </div>
                    </div>
                    <div className="relative ml-[19px] h-[16px] w-[66px]">
                        <div className="absolute top-[5px] h-px w-full bg-[#777]" />
                        <div className="absolute bottom-0 h-[3px] w-full bg-[repeating-linear-gradient(to_right,#555_0,#555_1px,transparent_1px,transparent_5px)]" />
                        <div className="absolute top-0 left-[20px] h-[11px] w-[8px] rounded-b-[4px] border border-[#777] bg-[#e8e8e8]" />
                    </div>
                </Section>
                <div className="h-[3px] shrink-0 bg-[#1c2230]" />
                <div className="flex h-[24px] shrink-0 items-stretch bg-[#b0b0b0] pl-[704px]">
                    {["属性", "信息", "诊断"].map((t, i) => (
                        <div
                            key={t}
                            className={`mr-[2px] flex w-[73px] items-center gap-[3px] border-x border-[#8f8f8f] pl-[2px] ${
                                i === 0 ? "border-t-2 border-t-[#ffa000] bg-linear-to-b from-[#f4f4f4] to-[#dddddd] text-[#111]" : "border-t border-t-[#8f8f8f] bg-linear-to-b from-[#dcdcdc] to-[#c8c8c8] text-[#444]"
                            }`}
                        >
                            <CenterTabIcon k={i} />
                            <span className="font-['Noto_Sans_CJK_SC'] text-[14px] font-bold tracking-[2px]">{t}</span>
                        </div>
                    ))}
                    <div className="ml-[20px] flex items-center gap-[7px]">
                        <svg width="11" height="11" viewBox="0 0 11 11"><path d="M0 3h8v8H0z" fill="#fff" /><path d="M3 0h8v8h-2V2H3z" fill="#e8e8e8" /></svg>
                        <svg width="11" height="12" viewBox="0 0 11 12"><path d="M0 0h11v12H0z" fill="#d0d0d0" /><path d="M1 3h9M1 6h9M1 9h9" stroke="#aaa" /></svg>
                        <svg width="13" height="7" viewBox="0 0 13 7"><path d="M0 7h13L6.500 0z" fill="#fff" /></svg>
                    </div>
                </div>
            </div>
            <div className="w-[3px] shrink-0 bg-[#1c2230]" />

            {/* right: libraries */}
            <div className="flex w-[300px] shrink-0 flex-col">
                <div className="flex h-[28px] shrink-0 items-end border-b border-[#707070] bg-linear-to-b from-[#f0f0f0] to-[#d8d8d8] pb-[1px] pl-[6px]">
                    <Txt text="选项" bold cls="text-[14px] tracking-[1.5px]" />
                </div>
                <Section className="h-[27px] bg-[#ececec] pl-[4px]">
                    <S>
                        <rect x="0.5" y="1" width="15" height="14" fill="#fff" stroke="#4a5ac0" />
                        <path d="M11 8H5M7 5L4 8l3 3" stroke="#111" strokeWidth="2" fill="none" />
                        <rect x="12" y="1" width="3" height="14" fill="#2a3fa0" />
                    </S>
                    <span className="ml-[7px] font-['Noto_Sans_CJK_SC'] text-[13px] tracking-[.5px]">库视图</span>
                    <div className="ml-[11px] flex h-[15px] w-[16px] items-center justify-center border border-[#aaa] bg-[#e0e0e0]">
                        <svg width="10" height="10" viewBox="0 0 10 10"><path d="M5 1v3M2 5h6M2 5v2M8 5v2" stroke="#777" fill="none" /></svg>
                    </div>
                    <div className="ml-auto mr-[5px] h-[14px] w-[15px] border border-[#5a6ac0] bg-linear-to-br from-white to-[#c8d4f4]" />
                </Section>
                <div className="h-[3px] shrink-0 bg-[#a8a8a8]" />
                <PanelHead title="项目库" />
                <Section className="h-[25px] bg-[#ececec] pl-[7px]">
                    <GridStar />
                    <Sep cls="ml-[5px] mr-[8px]" />
                    <ListBox />
                    <div className="ml-[7px] flex h-[18px] w-[138px] border border-[#8a8a8a] bg-white">
                        <span className="flex-1 pl-[4px] font-['Noto_Sans_CJK_SC'] text-[13px] leading-[16px] tracking-[1px]">全部</span>
                        <div className="flex w-[16px] items-center justify-center border-l border-[#8a8a8a] bg-[#dcdcdc]">
                            <svg width="9" height="5" viewBox="0 0 9 5"><path d="M0 0h9L4.500 5z" fill="#222" /></svg>
                        </div>
                    </div>
                    <div className="ml-[9px]">
                        <S><path d="M1 2h8l1 2v10H1z" fill="#dcdcdc" stroke="#888" /><path d="M6 8h6" stroke="#222" strokeWidth="2" /><path d="M11 4l5 4-5 4z" fill="#222" /></S>
                    </div>
                    <div className="ml-[8px]">
                        <S><path d="M1 2h8l1 2v10H1z" fill="#e8e8e8" stroke="#888" /><path d="M8 8h8" stroke="#222" strokeWidth="2" /><path d="M9 4L4 8l5 4z" fill="#222" /></S>
                    </div>
                </Section>
                <div className="flex h-[124px] shrink-0 overflow-hidden">
                    <div className="min-w-0 flex-1 overflow-hidden">
                        {projectLib.map((r, i) => (
                            <TreeRow key={i} {...r} />
                        ))}
                    </div>
                    <Scrollbar thumb={39} before={2} />
                </div>
                <div className="h-[4px] shrink-0 bg-[#a8a8a8]" />
                <PanelHead title="全局库" />
                <Section className="h-[25px] bg-[#ececec] pl-[7px]">
                    <div className="flex gap-[8px]">
                        <S><path d="M0 6c2-1 4-1 7 0 3-1 5-1 7 0v8c-2-1-4-1-7 0-3-1-5-1-7 0z" fill="#fff" stroke="#2f45b0" /><Star x={11} y={4} /></S>
                        <S><path d="M0 6c2-1 4-1 7 0 3-1 5-1 7 0v8c-2-1-4-1-7 0-3-1-5-1-7 0z" fill="#fff" stroke="#2f45b0" /><path d="M3 5c2-3 6-3 8 0l3-1v5h-5z" fill="#129a4a" /></S>
                        <S><rect x="1" y="1" width="8" height="8" fill="#e8e8e8" stroke="#777" /><rect x="6" y="7" width="9" height="8" fill="#ddd" stroke="#555" /><rect x="9" y="11" width="3" height="3" fill="#333" /></S>
                        <S><path d="M0 7c2-1 4-1 7 0 3-1 5-1 7 0v7c-2-1-4-1-7 0-3-1-5-1-7 0z" fill="#fff" stroke="#2f45b0" /><path d="M9 5H5M6 2L2 5l4 3" stroke="#101a4a" strokeWidth="2" fill="none" /></S>
                        <S><path d="M1 1h8l2 2v12H1z" fill="#cfd8f8" stroke="#4a5ac0" /><path d="M3 4h5M3 7h3M3 10h3" stroke="#223" /><path d="M6 8h6" stroke="#111" strokeWidth="2" /><path d="M11 4l5 4-5 4z" fill="#111" /></S>
                        <S><path d="M1 2h8l1 2v10H1z" fill="#e8e8e8" stroke="#888" /><path d="M8 8h8" stroke="#222" strokeWidth="2" /><path d="M9 4L4 8l5 4z" fill="#222" /></S>
                    </div>
                    <div className="ml-auto flex items-center">
                        <GridStar />
                        <Sep cls="ml-[6px] mr-[7px]" />
                        <ListBox />
                        <svg width="6" height="9" viewBox="0 0 6 9" className="mb-[8px] ml-[5px] mr-[3px]"><path d="M0 0v9l5-4.500z" fill="#111" /></svg>
                    </div>
                </Section>
                <div className="min-h-0 flex-1 overflow-hidden">
                    {globalLib.map((r, i) => (
                        <TreeRow key={i} {...r} />
                    ))}
                    <div className="h-[19px] border-b border-white" />
                    <div className="h-[19px]" />
                </div>
                <div className="h-[3px] shrink-0 bg-[#a8a8a8]" />
                <div className="flex h-[22px] shrink-0 items-center bg-linear-to-b from-[#eaeaea] from-40% to-[#d4d4d4] to-40%">
                    <div className="flex h-full w-[20px] shrink-0 items-center justify-center border-r border-[#8a8a8a]">
                        <svg width="7" height="10" viewBox="0 0 7 10"><path d="M1 1l4 4-4 4" stroke="#111" strokeWidth="2" fill="none" /></svg>
                    </div>
                    <div className="ml-[5px]">
                        <Txt text="信息 (全局库)" bold cls="text-[14px] tracking-[1px]" />
                    </div>
                </div>
            </div>
            <div className="w-px shrink-0 bg-[#1c2230]" />
            <div className="flex w-[4px] shrink-0 flex-col bg-[#c4c4c4]">
                <div className="h-[300px] bg-[#e4e4e4]" />
                <div className="flex-1 bg-[#b4b4b4]" />
            </div>

            {/* annotations drawn over the screenshot */}
            <div className="absolute top-[190px] left-[588px] h-[673px] w-[617px] rounded-[4px] border-4 border-[#ff2a1f]" />
            <div className="absolute top-[637px] left-[1622px] h-[42px] w-[157px] rounded-[6px] border-[3px] border-[#ff2a1f]" />
            <svg width="1878" height="904" className="pointer-events-none absolute top-0 left-0">
                <path d="M249 269L268 273L262 277L284 298L257 282L255 288z" fill="#ff2a1f" />
                <path d="M1601 382L1597 399L1594 394L1588 399L1591 390L1587 388z" fill="#ff2a1f" />
            </svg>
            <span className="absolute top-[261px] left-[305px] font-['Liberation_Sans'] text-[32px] leading-[36px] text-[#ff2a1f]">2</span>
            <span className="absolute top-[406px] left-[1586px] font-['Liberation_Sans'] text-[33px] leading-[36px] text-[#ff2a1f]">1</span>
        </div>
    );
}
